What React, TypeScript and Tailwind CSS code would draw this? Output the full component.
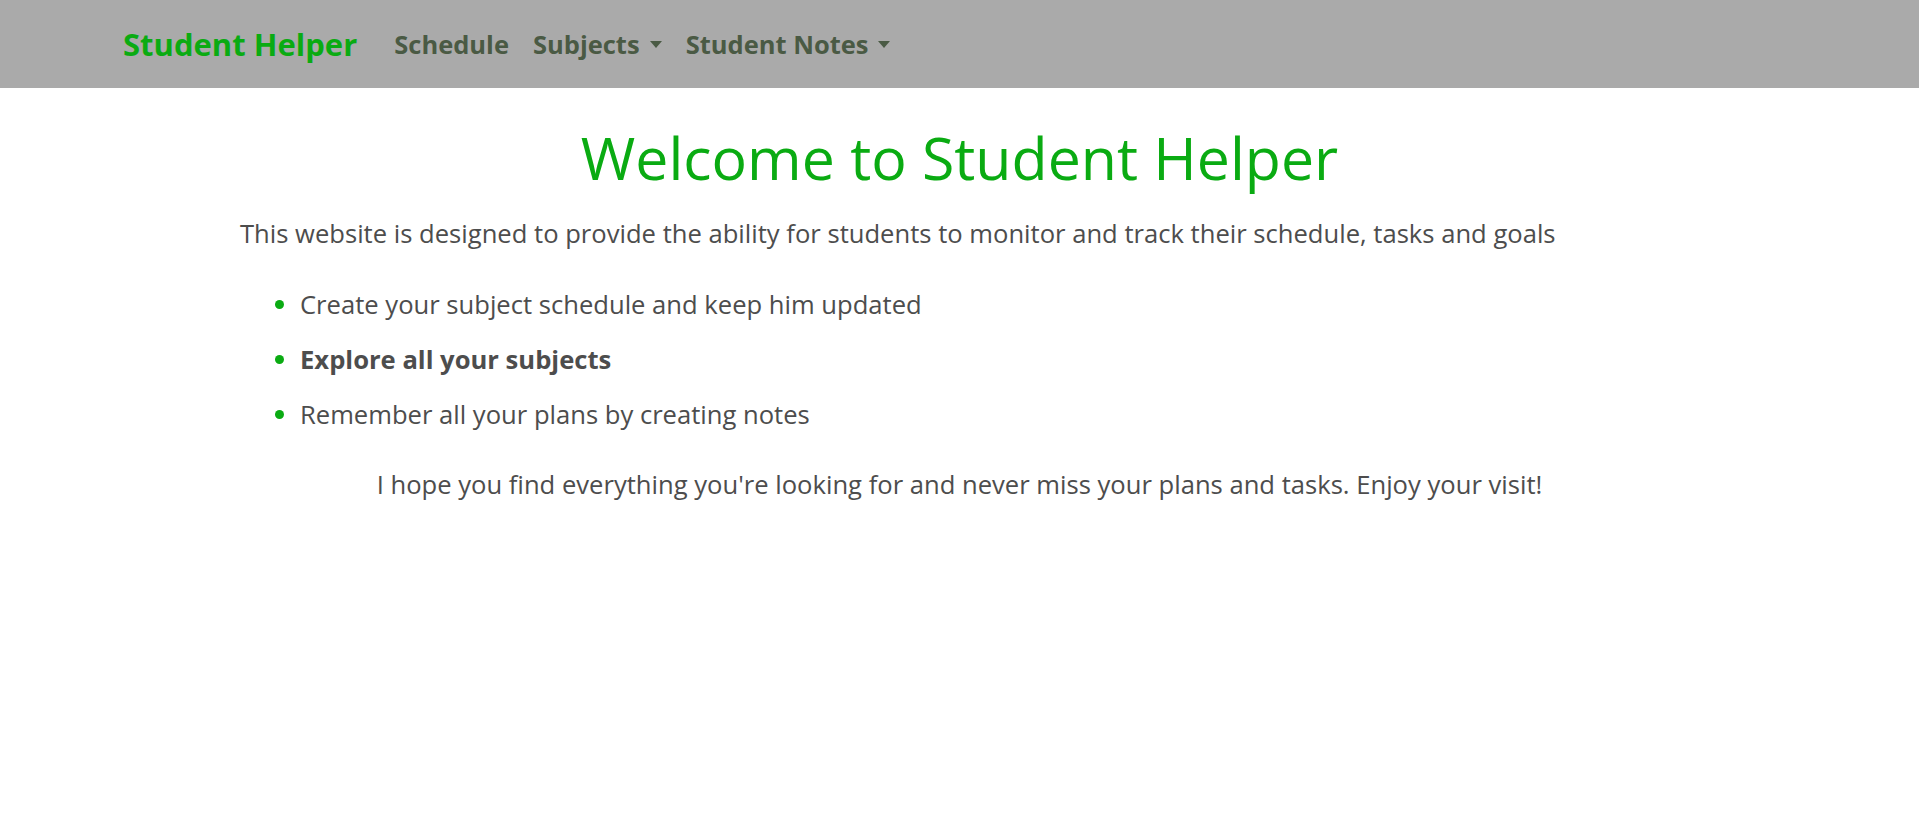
import React from "react";

const navLinks = [
  { label: "Schedule", dropdown: false },
  { label: "Subjects", dropdown: true },
  { label: "Student Notes", dropdown: true },
];

const features = [
  { text: "Create your subject schedule and keep him updated", bold: false },
  { text: "Explore all your subjects", bold: true },
  { text: "Remember all your plans by creating notes", bold: false },
];

function Caret() {
  return (
    <span className="ml-[10px] inline-block h-0 w-0 border-x-[6px] border-t-[7px] border-x-transparent border-t-[#4a5a44] align-middle" />
  );
}

export default function App() {
  return (
    <div className="min-h-screen bg-white font-['Open_Sans',sans-serif]">
      <nav className="flex h-[88px] items-center bg-[#aaaaaa] pl-[123px]">
        <a className="text-[31px] font-bold text-[#0aab12]" href="#">
          Student Helper
        </a>
        <ul className="ml-[37px] flex items-center gap-[24px]">
          {navLinks.map((link) => (
            <li key={link.label} className="flex items-center text-[25.5px] font-bold text-[#4a5a44]">
              {link.label}
              {link.dropdown && <Caret />}
            </li>
          ))}
        </ul>
      </nav>

      <main className="pt-[34px]">
        <h1 className="text-center text-[59px] leading-[1.2] text-[#0aab12]">Welcome to Student Helper</h1>
        <p className="mt-[22px] pl-[240px] text-[25.6px] text-[#4d4d4d]">
          This website is designed to provide the ability for students to monitor and track their schedule, tasks and goals
        </p>
        <ul className="mt-[24px] pl-[300px] text-[25.6px] text-[#4d4d4d]">
          {features.map((item) => (
            <li key={item.text} className={`relative h-[55px] leading-[55px] ${item.bold ? "font-bold" : ""}`}>
              <span className="absolute left-[-25px] top-[23px] h-[9px] w-[9px] rounded-full bg-[#0aab12]" />
              {item.text}
            </li>
          ))}
        </ul>
        <p className="mt-[24px] text-center text-[25.6px] text-[#4d4d4d]">
          I hope you find everything you're looking for and never miss your plans and tasks. Enjoy your visit!
        </p>
      </main>
    </div>
  );
}
